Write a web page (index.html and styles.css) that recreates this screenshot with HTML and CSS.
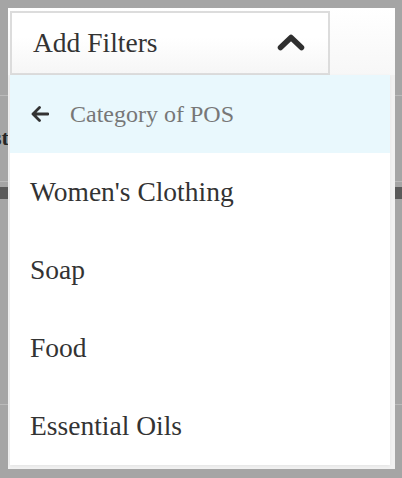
FILE: index.html
```html
<!DOCTYPE html>
<html lang="en">
<head>
<meta charset="utf-8">
<title>Add Filters</title>
<link rel="stylesheet" href="styles.css">
</head>
<body>
<div class="page">
  <div class="backdrop">
    <div class="bd-line bd-line-1"></div>
    <div class="bd-text">st</div>
    <div class="bd-line bd-line-2"></div>
    <div class="bd-bar"></div>
    <div class="bd-line bd-line-3"></div>
  </div>

  <div class="panel">
    <button class="filter-btn" type="button">
      <span class="filter-label">Add Filters</span>
      <svg class="chevron" width="28" height="17" viewBox="0 0 28 17" aria-hidden="true">
        <polyline points="3.5,13.5 14,3.5 24.5,13.5" fill="none" stroke="#2f2f2f" stroke-width="5.5" stroke-linecap="round" stroke-linejoin="round"/>
      </svg>
    </button>
    <div class="dropdown">
      <div class="dd-header">
        <svg class="back-arrow" width="18" height="16" viewBox="0 0 18 16" aria-hidden="true">
          <path d="M2 8 H17 M8.5 1.5 L2 8 L8.5 14.5" fill="none" stroke="#333" stroke-width="2.8" stroke-linecap="round" stroke-linejoin="round"/>
        </svg>
        <span class="dd-title">Category of POS</span>
      </div>
      <div class="dd-item">Women's Clothing</div>
      <div class="dd-item">Soap</div>
      <div class="dd-item">Food</div>
      <div class="dd-item">Essential Oils</div>
    </div>
  </div>
</div>
</body>
</html>
```

FILE: styles.css
```css
html, body {
  margin: 0;
  padding: 0;
}

body {
  font-family: "Liberation Serif", "Times New Roman", serif;
  background: #a5a5a5;
}

.page {
  position: relative;
  width: 402px;
  height: 478px;
  overflow: hidden;
  background: #a5a5a5;
}

/* page underneath the overlay */
.backdrop {
  display: flex;
  flex-direction: column;
}

.bd-line {
  height: 1px;
  background: #bababa;
}

.bd-line-1 {
  margin-top: 95px;
}

.bd-text {
  margin-top: 29px;
  height: 25px;
  line-height: 25px;
  font-size: 22px;
  font-weight: bold;
  color: #262626;
  text-indent: -7px;
}

.bd-line-2 {
  margin-top: 31px;
}

.bd-bar {
  margin-top: 5px;
  height: 12px;
  background: #5a5a5a;
}

.bd-line-3 {
  margin-top: 205px;
}

/* popover */
.panel {
  position: absolute;
  top: 8px;
  left: 8px;
  width: 387px;
  height: 461px;
  box-sizing: border-box;
  padding: 3px 5px 0 2px;
  background: linear-gradient(to bottom, #ffffff 0, #f7f7f7 67px, #f1f1f1 67px, #f1f1f1 100%);
  display: flex;
  flex-direction: column;
}

.filter-btn {
  width: 320px;
  height: 64px;
  box-sizing: border-box;
  margin: 0;
  padding: 0 23px 0 21px;
  border: 2px solid #dcdcdc;
  border-bottom-width: 2px;
  background: linear-gradient(to bottom, #ffffff 0%, #ffffff 40%, #f6f6f6 100%);
  display: flex;
  align-items: center;
  justify-content: space-between;
  font-family: "Liberation Serif", "Times New Roman", serif;
  font-size: 27.5px;
  color: #333333;
  text-align: left;
  cursor: pointer;
}

.filter-label {
  line-height: normal;
}

.chevron {
  display: block;
  margin-top: -2px;
}

.dropdown {
  width: 380px;
  background: #ffffff;
  box-shadow: 0 1px 3px rgba(0, 0, 0, 0.06);
  display: flex;
  flex-direction: column;
}

.dd-header {
  height: 78px;
  background: #e9f8fd;
  display: flex;
  align-items: center;
  padding-left: 21px;
  gap: 21px;
}

.back-arrow {
  display: block;
}

.dd-title {
  font-size: 24px;
  color: #777777;
}

.dd-item {
  height: 78px;
  display: flex;
  align-items: center;
  padding-left: 20px;
  font-size: 27.5px;
  color: #333333;
}
```
